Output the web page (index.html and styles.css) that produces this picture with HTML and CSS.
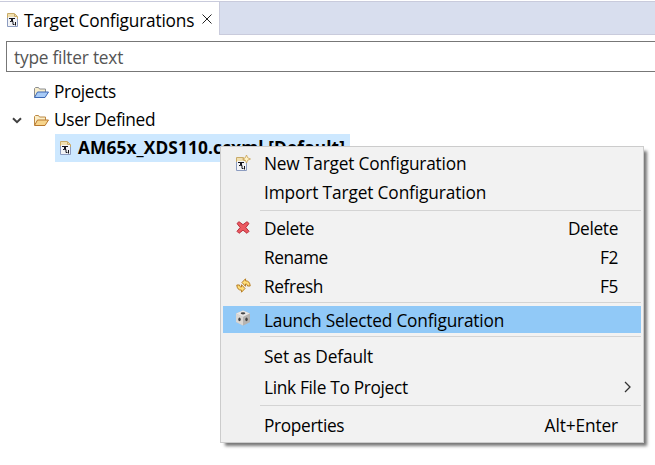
FILE: index.html
```html
<!DOCTYPE html>
<html lang="en">
<head>
<meta charset="utf-8">
<title>Target Configurations</title>
<link rel="stylesheet" href="styles.css">
</head>
<body>
<svg width="0" height="0" class="defs">
  <symbol id="config" viewBox="0 0 11 14">
    <path d="M.5.5h7l3 3v10H.5z" fill="#f3f4f6"/>
    <path d="M1 1h6v3H1z" fill="#f0dfb0"/>
    <path d="M.5 5V.5h7l3 3V6" fill="none" stroke="#c9ab68"/>
    <path d="M.5 5v8.500h10V6" fill="none" stroke="#8c9cc0"/>
    <path d="M7.500 1v2.500h2.500" fill="#ead39a" stroke="#c9ab68"/>
    <path d="M2 5.500h6M4.500 5v3.500H3M5.500 5v4M6 8.500v3h1.500M8.500 9v3.500" fill="none" stroke="#15151c"/>
  </symbol>
</svg>
<header class="tabbar">
  <div class="tab">
    <svg class="tab-icon" width="11" height="14"><use href="#config"/></svg>
    <span class="tab-title">Target Configurations</span>
    <svg class="close" width="10" height="10" viewBox="0 0 10 10"><path d="M.5.5l9 9M9.500.5l-9 9" stroke="#222" fill="none"/></svg>
  </div>
</header>
<div class="filter"><span>type filter text</span></div>
<main class="tree">
  <div class="node">
    <svg class="folder" width="16" height="13" viewBox="0 0 16 13"><path d="M1.500 11V2.500l1-1h3l1 1.500h6v3" fill="#f7edcb" stroke="#8b8d90"/><path d="M1.500 11.500L4.500 6h11L12 11.500z" fill="#a8cbf7" stroke="#3c67b4"/></svg>
    <span class="projects">Projects</span>
  </div>
  <div class="node">
    <svg class="twisty" width="10" height="7" viewBox="0 0 10 7"><path d="M1 1.200l4 4 4-4" fill="none" stroke="#404040" stroke-width="2"/></svg>
    <svg class="folder" width="16" height="13" viewBox="0 0 16 13"><path d="M1.500 11V2.500l1-1h3l1 1.500h6v3" fill="#fbeec7" stroke="#bd8945"/><path d="M1.500 11.500L4.500 6h11L12 11.500z" fill="#f7d58c" stroke="#b9782f"/></svg>
    <span class="user">User Defined</span>
  </div>
  <div class="node file">
    <svg class="file-icon" width="11" height="14"><use href="#config"/></svg>
    <span class="filename">AM65x_XDS110.ccxml [Default]</span>
  </div>
</main>
<nav class="menu">
  <div class="item h30"><i><svg class="new-icon" width="15" height="16" viewBox="0 0 15 16"><svg y="2" width="11" height="14"><use href="#config"/></svg><path d="M10.500 0l1.200 2.800 2.800 1.200-2.800 1.200-1.200 2.800-1.200-2.800L6.500 4l2.800-1.200z" fill="#fff3c6" stroke="#c9a257" stroke-width=".8"/></svg></i><span class="l-new">New Target Configuration</span></div>
  <div class="item h28"><i></i><span class="l-import">Import Target Configuration</span></div>
  <hr class="sep7">
  <div class="item h30"><i><svg class="delete-icon" width="14" height="13" viewBox="0 0 14 13"><path d="M1 2.500L3 .7l4 3L11 .7l2 1.800-3.200 4L13 10.300l-2 2L7 9.200l-4 3.100-2-2 3.200-3.800z" fill="#ec5960" stroke="#b92f3c"/></svg></i><span>Delete</span><kbd>Delete</kbd></div>
  <div class="item h28"><i></i><span class="l-rename">Rename</span><kbd>F2</kbd></div>
  <div class="item h30"><i><svg class="refresh-icon" width="15" height="15" viewBox="0 0 15 15"><path d="M6 4.500L9.500.8v2c2.900 0 4.500 1.800 4.700 5.200h-2.700c-.2-1.500-.6-2-2-2v2.300zM9 10.500L5.500 14.200v-2C2.600 12.200 1 10.400.8 7h2.700c.2 1.500.6 2 2 2V6.700z" fill="#ffdf7a" stroke="#b67d22"/></svg></i><span class="l-rename">Refresh</span><kbd>F5</kbd></div>
  <hr class="sep4">
  <div class="item active"><i><svg class="cube" width="16" height="16" viewBox="0 0 16 16"><path d="M8 .5l7 3v8.500l-7 3.500-7-3.500V3.500z" fill="#bbb"/><path d="M8 .5l7 3-7 3.500-7-3.500z" fill="#e9e7e5"/><path d="M1 3.500L8 7v8.500L1 12z" fill="#dad7d4"/><path d="M8 7l7-3.500V12l-7 3.500z" fill="#b5b3b1"/><ellipse cx="8" cy="3.300" rx="2.300" ry="1.100" fill="#444"/><ellipse cx="4.500" cy="9.300" rx="1.200" ry="1.900" fill="#444"/><ellipse cx="11.500" cy="9.300" rx="1.200" ry="1.900" fill="#444"/></svg></i><span class="l-launch">Launch Selected Configuration</span></div>
  <hr class="sep8">
  <div class="item h30"><i></i><span class="l-set">Set as Default</span></div>
  <div class="item h31"><i></i><span class="l-link">Link File To Project</span><svg class="arrow" width="7" height="12" viewBox="0 0 7 12"><path d="M1 1l5 5-5 5" fill="none" stroke="#333" stroke-width="1.300"/></svg></div>
  <hr class="sep7">
  <div class="item h32"><i></i><span class="l-prop">Properties</span><kbd class="l-alt">Alt+Enter</kbd></div>
</nav>
</body>
</html>
```
FILE: styles.css
```css
* { box-sizing: border-box; }
body { margin: 0; width: 655px; height: 465px; overflow: hidden; background: #fff; color: #000; font: 17.3px/24px "Open Sans", "Noto Sans", sans-serif; white-space: nowrap; letter-spacing: -.35px; }
svg { display: block; flex: none; }
.defs { position: absolute; }
.tabbar { margin-top: 1px; height: 34px; background: #d8deee; border-top: 1px solid #c9cbdc; border-bottom: 1px solid #c9cbdc; }
.tab { width: 220px; height: 33px; background: #fff; border-right: 1px solid #c9cbdc; display: flex; align-items: center; padding: 3px 0 0 7px; }
.tab-icon { margin-top: -1px; }
.tab-title { width: 169px; margin: 2px 0 0 6px; letter-spacing: -.2px; }
.close { margin: -2px 0 0 9px; }
.filter { margin: 6px -2px 0 6px; height: 31px; border: 1px solid #777; display: flex; align-items: center; padding: 2px 0 0 7px; color: #555; letter-spacing: -.22px; }
.tree { padding-top: 6px; }
.node { height: 28px; display: flex; align-items: center; padding-left: 33px; }
.node:nth-child(2) { padding-left: 12px; }
.twisty { margin-right: 11px; }
.folder { margin-right: 5px; }
.file { margin-left: 55px; width: 295px; height: 28px; padding-left: 5px; background: #cde8ff; font-weight: 700; }
.filename { margin-left: 7px; letter-spacing: .12px; }
.menu { position: absolute; left: 220px; top: 146px; width: 424px; height: 297px; padding: 2px; border: 1px solid #ccc; background: linear-gradient(90deg, #f0f0f0 39px, #f2f2f2 39px); box-shadow: 4px 4px 3px -1px #777; }
.item { display: flex; align-items: center; padding-right: 23px; }
.item i { width: 41px; display: flex; padding-left: 13px; }
.item span, kbd { margin-top: -1px; }
kbd { font: inherit; margin-left: auto; }
.h28 { height: 28px; }
.h30 { height: 30px; }
.h31 { height: 31px; }
.h32 { height: 32px; }
hr { margin: 0 0 0 37px; border: 0; background: linear-gradient(#d4d4d4, #d4d4d4) 0 3px / 100% 1px no-repeat; }
.sep7 { height: 7px; }
.sep4 { height: 4px; background-position-y: 0; }
.sep8 { height: 8px; }
.active { height: 27px; background: #91c9f7; }
.new-icon, .delete-icon, .refresh-icon, .cube { margin-top: -3px; }
.cube { margin-left: -1px; }
.l-new { letter-spacing: -.18px; }
.l-import { letter-spacing: -.13px; }
.l-rename { letter-spacing: -.4px; }
.item .l-launch { letter-spacing: -.2px; margin-top: 2px; }
.item .l-set { letter-spacing: -.13px; margin-top: 2px; }
.item .l-link { letter-spacing: -.32px; margin-top: 3px; }
.item .l-prop, .item .l-alt { margin-top: 2px; }
.l-alt { letter-spacing: -.12px; }
.arrow { margin-left: auto; margin-right: -13px; }
```
